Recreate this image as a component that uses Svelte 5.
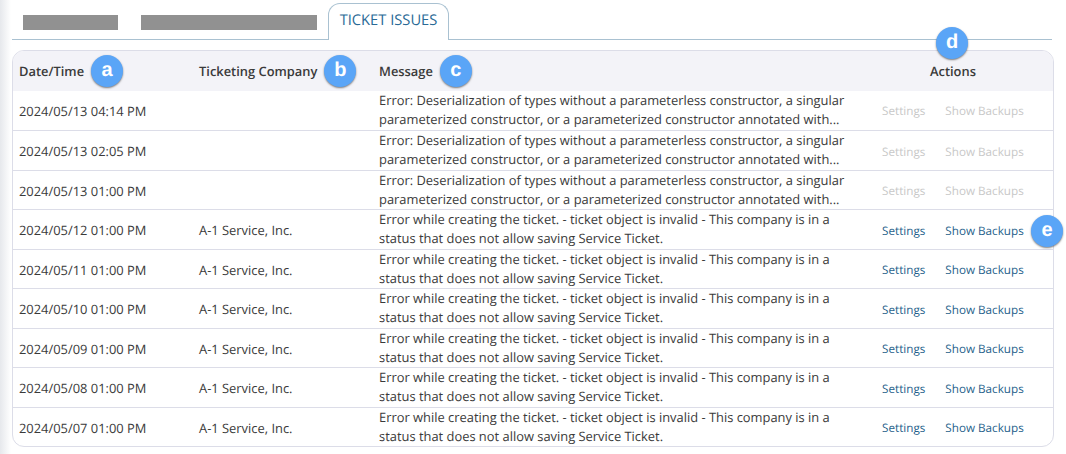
<script>
	const deserialization =
		"Error: Deserialization of types without a parameterless constructor, a singular parameterized constructor, or a parameterized constructor annotated with...";
	const invalid =
		"Error while creating the ticket. - ticket object is invalid - This company is in a status that does not allow saving Service Ticket.";

	const rows = [
		{ date: "2024/05/13 04:14 PM", company: "", message: deserialization, disabled: true },
		{ date: "2024/05/13 02:05 PM", company: "", message: deserialization, disabled: true },
		{ date: "2024/05/13 01:00 PM", company: "", message: deserialization, disabled: true },
		{ date: "2024/05/12 01:00 PM", company: "A-1 Service, Inc.", message: invalid, badge: "e" },
		{ date: "2024/05/11 01:00 PM", company: "A-1 Service, Inc.", message: invalid },
		{ date: "2024/05/10 01:00 PM", company: "A-1 Service, Inc.", message: invalid },
		{ date: "2024/05/09 01:00 PM", company: "A-1 Service, Inc.", message: invalid },
		{ date: "2024/05/08 01:00 PM", company: "A-1 Service, Inc.", message: invalid },
		{ date: "2024/05/07 01:00 PM", company: "A-1 Service, Inc.", message: invalid }
	];
</script>

<div class="page">
	<nav class="tabs">
		<span class="redacted first"></span>
		<span class="redacted second"></span>
		<span class="tab">TICKET ISSUES</span>
	</nav>

	<div class="table">
		<div class="row head">
			<div class="cell"><b>Date/Time</b><span class="badge">a</span></div>
			<div class="cell"><b>Ticketing Company</b><span class="badge">b</span></div>
			<div class="cell"><b>Message</b><span class="badge">c</span></div>
			<div class="cell actions-head">
				<b>Actions</b>
				<span class="badge top">d</span>
			</div>
		</div>
		{#each rows as row}
			<div class="row">
				<div class="cell">{row.date}</div>
				<div class="cell">{row.company}</div>
				<div class="cell message">{row.message}</div>
				<div class="cell actions" class:disabled={row.disabled}>
					<span>Settings</span>
					<span>Show Backups</span>
					{#if row.badge}
						<span class="badge side">{row.badge}</span>
					{/if}
				</div>
			</div>
		{/each}
	</div>
</div>

<style>
	:global(body) {
		margin: 0;
		background: #fff;
	}

	.page {
		width: 1066px;
		height: 454px;
		box-sizing: border-box;
		padding: 3px 12px 0;
		overflow: hidden;
		position: relative;
		font-family: "Open Sans", sans-serif;
		font-size: 12.9px;
		text-rendering: geometricPrecision;
		color: #3a3a3a;
		background: linear-gradient(to right, #e6e8ec 0, #fff 11px);
	}

	.tabs {
		display: flex;
		align-items: flex-end;
		height: 36px;
		border-bottom: 1px solid #a9c1d1;
		margin-right: 2px;
	}

	.redacted {
		height: 15px;
		background: #919191;
		margin-bottom: 9px;
	}
	.first {
		width: 95px;
		margin-left: 11px;
	}
	.second {
		width: 176px;
		margin-left: 23px;
	}

	.tab {
		box-sizing: border-box;
		width: 121px;
		height: 37px;
		margin: 0 0 -1px 11px;
		padding-top: 7px;
		text-align: center;
		font-size: 14.7px;
		line-height: 19px;
		color: #2a6a96;
		background: #fff;
		border: 1px solid #a9c1d1;
		border-bottom: none;
		border-radius: 12px 12px 0 0;
	}

	.table {
		margin-top: 10px;
		width: 1042px;
		box-sizing: border-box;
		border: 1px solid #dcdde8;
		border-radius: 12px;
		background: #fff;
	}

	.row {
		display: grid;
		grid-template-columns: 180px 180px 496px 1fr;
		height: 39.5px;
		box-sizing: border-box;
		padding-left: 6px;
		border-top: 1px solid #dcdde8;
		align-items: center;
	}
	.row:nth-child(2) {
		border-top: none;
	}

	.head {
		height: 39.5px;
		border-top: none;
		background: #f3f3f8;
		border-radius: 11px 11px 0 0;
	}
	.head b {
		font-weight: 600;
	}
	.head .cell {
		display: flex;
		align-items: center;
		gap: 7px;
	}

	.message {
		line-height: 19px;
		padding: 0 16px 2px 0;
	}

	.actions {
		display: flex;
		gap: 20px;
		padding: 1px 0 0 7px;
		font-size: 11.7px;
		color: #1f5f8b;
		position: relative;
	}
	.disabled {
		color: #c8c8c8;
	}

	.actions-head {
		padding-left: 55px;
		position: relative;
	}

	.badge {
		box-sizing: border-box;
		width: 32px;
		height: 32px;
		border-radius: 50%;
		background: #5aa5f7;
		color: #fff;
		font-family: "Liberation Sans", sans-serif;
		font-weight: 700;
		font-size: 20px;
		line-height: 30px;
		text-align: center;
		box-shadow: 0 1px 2px rgba(0, 0, 0, 0.5);
		flex: none;
	}

	.top {
		position: absolute;
		left: 61px;
		top: -35px;
	}
	.side {
		position: absolute;
		left: 156px;
		top: -7px;
	}
</style>
